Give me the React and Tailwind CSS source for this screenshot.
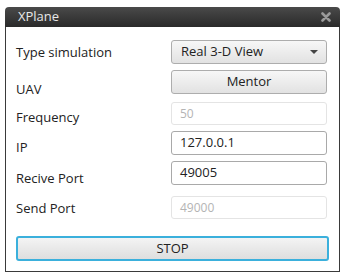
const Row = ({ label, pt, className = "", children }) => (
  <div className={`h-[24px] flex items-start ${className}`}>
    <div className="w-[155px] text-[13px] leading-[18px] text-[#222]" style={{ paddingTop: pt }}>
      {label}
    </div>
    <div className="w-[156px] h-full">{children}</div>
  </div>
);

export default function App() {
  return (
    <div className="w-[344px] h-[273px] bg-white pt-[7px] pl-[5px]" style={{ fontFamily: '"Open Sans", "Noto Sans", sans-serif' }}>
      <div className="w-[335px] h-[265px] flex flex-col">
        <div className="h-[20px] shrink-0 flex items-center justify-between px-[13px] rounded-t-[4px] bg-gradient-to-b from-[#4a4a4a] to-[#2a2a2a]">
          <span className="text-[13px] text-[#e8e8e8]">XPlane</span>
          <svg width="10" height="10" viewBox="0 0 10 10" className="mr-[-4px]">
            <path d="M1.5 1.5 L8.5 8.5 M8.5 1.5 L1.5 8.5" stroke="#9a9a9a" strokeWidth="2.6" strokeLinecap="round" />
          </svg>
        </div>
        <div className="flex-1 border-x border-b border-[#3a3a3a] px-[10px] pt-[13px] flex flex-col">
          <Row label="Type simulation" pt={3}>
            <div className="h-full border border-[#adadad] rounded-[3px] bg-gradient-to-b from-[#f7f7f7] to-[#e2e2e2] flex items-center justify-between pl-[9px] pr-[8px]">
              <span className="text-[13px] text-[#222]">Real 3-D View</span>
              <svg width="8" height="4" viewBox="0 0 8 4"><path d="M0 0 H8 L4 4 Z" fill="#444" /></svg>
            </div>
          </Row>
          <Row label="UAV" pt={10} className="mt-[6px]">
            <div className="h-full border border-[#adadad] rounded-[3px] bg-gradient-to-b from-[#f7f7f7] to-[#e2e2e2] flex items-center justify-center">
              <span className="text-[13px] text-[#222]">Mentor</span>
            </div>
          </Row>
          <Row label="Frequency" pt={6} className="mt-[8px]">
            <div className="h-[23px] border border-[#e4e4e4] rounded-[3px] flex items-center pl-[8px] text-[12px] text-[#b4b4b4]">50</div>
          </Row>
          <Row label="IP" pt={7} className="mt-[5px]">
            <div className="h-full border border-[#a9a9a9] rounded-[3px] flex items-center pl-[8px] text-[13px] text-[#222]">127.0.0.1</div>
          </Row>
          <Row label="Recive Port" pt={8} className="mt-[6px]">
            <div className="h-full border border-[#a9a9a9] rounded-[3px] flex items-center pl-[8px] text-[13px] text-[#222]">49005</div>
          </Row>
          <Row label="Send Port" pt={3} className="mt-[11px]">
            <div className="h-[23px] border border-[#e4e4e4] rounded-[3px] flex items-center pl-[8px] text-[12px] text-[#b4b4b4]">49000</div>
          </Row>
          <div className="mt-[16px] h-[25px] border-2 border-[#3bb0dc] rounded-[3px] bg-gradient-to-b from-[#f4f4f4] to-[#dedede] flex items-center justify-center">
            <span className="text-[13px] text-[#222]">STOP</span>
          </div>
        </div>
      </div>
    </div>
  );
}
